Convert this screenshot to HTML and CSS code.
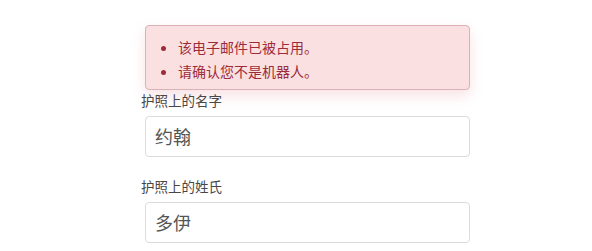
FILE: index.html
```html
<!DOCTYPE html>
<html lang="zh">
<head>
<meta charset="utf-8">
<link rel="stylesheet" href="styles.css">
</head>
<body>
<div class="form">
  <div class="alert">
    <ul class="errors">
      <li>该电子邮件已被占用。</li>
      <li>请确认您不是机器人。</li>
    </ul>
  </div>
  <label class="label">护照上的名字</label>
  <div class="field">约翰</div>
  <label class="label second">护照上的姓氏</label>
  <div class="field">多伊</div>
</div>
</body>
</html>
```
FILE: styles.css
```css
html, body {
  margin: 0;
  padding: 0;
  background: #ffffff;
}
body {
  font-family: "Noto Sans CJK SC", "Noto Sans", sans-serif;
}
.form {
  width: 325px;
  margin-left: 145px;
  padding-top: 25px;
  display: flex;
  flex-direction: column;
}
.alert {
  box-sizing: border-box;
  height: 65px;
  border: 1px solid #d9b1b6;
  border-radius: 4px;
  background: #fbe0e1;
  padding: 9px 15px 6px;
  color: #9c2c3a;
  box-shadow: 0 6px 14px rgba(240, 190, 198, 0.45);
}
.errors {
  margin: 0;
  padding-left: 17px;
  font-size: 14px;
  line-height: 24px;
}
.label {
  display: block;
  margin-left: -4px;
  font-size: 13.5px;
  line-height: 20px;
  color: #474747;
  margin-bottom: 6px;
}
.label.second {
  margin-top: 19px;
}
.field {
  box-sizing: border-box;
  height: 41px;
  border: 1px solid #dcdcdc;
  border-radius: 4px;
  padding: 0 9px;
  font-size: 18px;
  line-height: 39px;
  color: #555555;
  background: #ffffff;
}
```
